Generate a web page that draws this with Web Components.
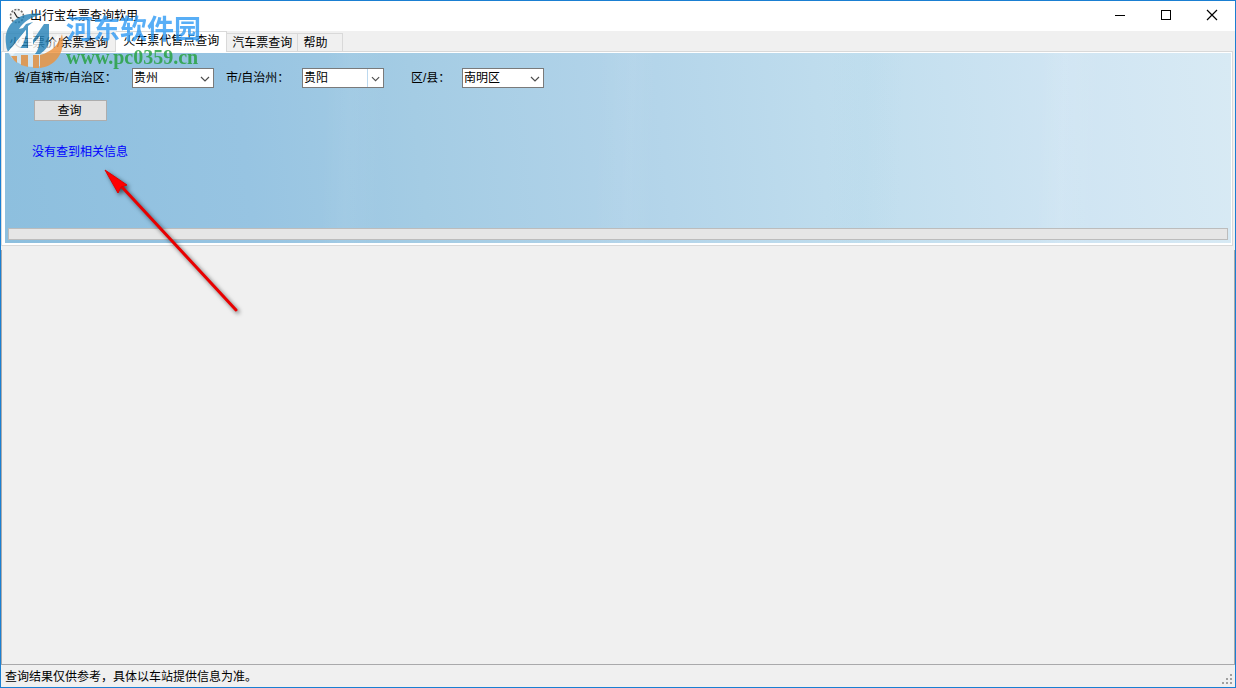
<!DOCTYPE html>
<html lang="zh-CN">
<head>
<meta charset="utf-8">
<title>出行宝车票查询软用</title>
<style>
  html, body { margin: 0; height: 100%; }
  body { font: 12px/16px "Liberation Sans", "Noto Sans CJK SC", sans-serif; color: #000; }
</style>
</head>
<body>
<app-window>
  <title-bar slot="title">出行宝车票查询软用</title-bar>
  <tab-strip slot="tabs">
    <tab-item>火车票价/余票查询</tab-item>
    <tab-item active>火车票代售点查询</tab-item>
    <tab-item>汽车票查询</tab-item>
    <tab-item>帮助</tab-item>
  </tab-strip>
  <query-pane slot="pane">
    <combo-field slot="fields" label="省/直辖市/自治区：" value="贵州" style="--label: 118px"></combo-field>
    <combo-field slot="fields" label="市/自治州：" value="贵阳" split style="--label: 76px"></combo-field>
    <combo-field slot="fields" label="区/县：" value="南明区" style="--label: 51px; margin-left: 15px"></combo-field>
    <push-button slot="action">查询</push-button>
    <span slot="message">没有查到相关信息</span>
  </query-pane>
  <status-bar slot="status">查询结果仅供参考，具体以车站提供信息为准。</status-bar>
  <site-watermark slot="overlay" name="河东软件园" address="www.pc0359.cn"></site-watermark>
  <pointer-arrow slot="overlay"></pointer-arrow>
</app-window>

<script>
class BaseElement extends HTMLElement {
  constructor() {
    super();
    this.attachShadow({ mode: "open" });
  }
  connectedCallback() {
    this.shadowRoot.innerHTML = this.render();
  }
}

customElements.define("app-window", class extends BaseElement {
  render() {
    return `<style>
      :host { position: relative; display: flex; flex-direction: column; box-sizing: border-box;
              min-height: 100vh; border: 1px solid #1a7fd2; background: #f0f0f0; overflow: hidden; }
      main { flex: 1; margin-top: 4px; border: 1px solid #a9a9ab; border-top: 0; }
    </style>
    <slot name="title"></slot>
    <slot name="tabs"></slot>
    <slot name="pane"></slot>
    <main></main>
    <slot name="status"></slot>
    <slot name="overlay"></slot>`;
  }
});

customElements.define("title-bar", class extends BaseElement {
  render() {
    return `<style>
      :host { display: flex; align-items: center; height: 30px; background: #fff; }
      .clock { width: 16px; height: 16px; margin: 0 5px 0 8px; }
      h1 { flex: 1; margin: 0; font: inherit; }
      button { width: 46px; height: 30px; padding: 0 0 2px; border: 0; background: none; display: grid; place-items: center; }
      button svg { width: 12px; height: 12px; fill: none; stroke: #000; }
    </style>
    <svg class="clock" viewBox="0 0 16 16" aria-hidden="true">
      <circle cx="8" cy="8" r="6.5" fill="#f4f4f2" stroke="#6d6d6d" stroke-width="1.6" stroke-dasharray="2 1.4"/>
      <path d="M5 4l3 5 3 1" fill="none" stroke="#222" stroke-width="1.2"/>
    </svg>
    <h1><slot></slot></h1>
    <button aria-label="最小化"><svg viewBox="0 0 12 12" shape-rendering="crispEdges"><path d="M1 6.5h10"/></svg></button>
    <button aria-label="最大化"><svg viewBox="0 0 12 12" shape-rendering="crispEdges"><path d="M1.5 1.5h9v9h-9z"/></svg></button>
    <button aria-label="关闭"><svg viewBox="0 0 12 12"><path d="M1 1l10 10M11 1L1 11" stroke-width="1.2"/></svg></button>`;
  }
});

customElements.define("tab-strip", class extends BaseElement {
  render() {
    return `<style>
      :host { display: flex; align-items: flex-end; height: 20px; padding-left: 2px; }
    </style><slot></slot>`;
  }
});

customElements.define("tab-item", class extends BaseElement {
  render() {
    const on = this.hasAttribute("active");
    return `<style>
      :host { display: block; }
      button { display: block; height: 18px; padding: 1px 5px 0; border: 1px solid #d9d9d9; border-bottom: 0;
               border-left-width: 0; background: #f0f0f0; color: inherit; font: inherit; line-height: 16px; white-space: nowrap; }
      :host(:first-child) button { border-left-width: 1px; padding-right: 7px; }
      :host(:last-child) button { padding-right: 15px; }
      :host([active]) { position: relative; margin-bottom: -1px; }
      :host([active]) button { height: 21px; padding: 0 7px 2px; background: #fff; }
    </style><button role="tab" aria-selected="${on}"><slot></slot></button>`;
  }
});

customElements.define("query-pane", class extends BaseElement {
  render() {
    return `<style>
      :host { display: block; box-sizing: border-box; margin-right: 2px; background: #fff;
              border: 1px solid #d9d9d9; padding: 1px 1px 2px 3px; }
      section { display: flex; flex-direction: column; align-items: flex-start; box-sizing: border-box;
        min-height: 190px; padding: 15px 3px 3px;
        background:
          linear-gradient(92deg, transparent 26%, #ffffff0a 28%, transparent 31%, transparent 48%, #ffffff0a 51%, transparent 53%,
            transparent 67%, #9fd0e614 70%, transparent 73%, transparent 84%, #ffffff10 86%, transparent 89%),
          linear-gradient(84deg, #8dbfde 0%, #97c4e2 20%, #a4cce4 34%, #b1d3e9 50%, #c1deee 70%, #d0e5f3 87%, #d8eaf4 100%); }
      .fields { display: flex; gap: 12px; padding-left: 6px; }
      .action { margin: 12px 0 23px 26px; }
      .message { margin-left: 24px; color: #00f; }
      progress { appearance: none; display: block; box-sizing: border-box; width: 100%; height: 12px;
                 margin-top: auto; border: 1px solid #bcbcbc; background: #e6e6e6; }
      progress::-webkit-progress-bar { background: #e6e6e6; }
      progress::-webkit-progress-value { background: #06b025; }
    </style>
    <section>
      <div class="fields"><slot name="fields"></slot></div>
      <div class="action"><slot name="action"></slot></div>
      <div class="message"><slot name="message"></slot></div>
      <progress value="0" max="100" aria-label="查询进度"></progress>
    </section>`;
  }
});

customElements.define("combo-field", class extends BaseElement {
  render() {
    return `<style>
      :host { display: flex; align-items: center; }
      label { width: var(--label); white-space: nowrap; }
      .box { display: grid; grid-template-columns: 1fr 17px; width: 82px; height: 20px; }
      select { grid-area: 1 / 1 / 2 / 3; appearance: none; box-sizing: border-box; width: 100%; height: 20px; margin: 0;
               padding: 0 17px 0 1px; border: 1px solid #7a7a7a; border-radius: 0; background: #fff; color: #000; font: inherit; }
      svg { grid-area: 1 / 2; width: 17px; height: 20px; pointer-events: none; z-index: 1; box-sizing: border-box; }
      :host([split]) .box svg { margin: 1px 0; height: 18px; border-left: 1px solid #bcd9ef; }
    </style>
    <label for="s">${this.getAttribute("label")}</label>
    <span class="box">
      <select id="s"><option>${this.getAttribute("value")}</option></select>
      <svg viewBox="0 0 17 20" aria-hidden="true"><path d="M4 9l4 4 4-4" fill="none" stroke="#4d4d4d" stroke-width="1.2"/></svg>
    </span>`;
  }
});

customElements.define("push-button", class extends BaseElement {
  render() {
    return `<style>
      :host { display: block; }
      button { display: block; width: 73px; height: 21px; padding: 0 2px 0 0; border: 1px solid #adadad;
               background: #e1e1e1; color: inherit; font: inherit; }
    </style><button type="button"><slot></slot></button>`;
  }
});

customElements.define("status-bar", class extends BaseElement {
  render() {
    return `<style>
      :host { display: flex; align-items: center; justify-content: space-between; height: 22px; padding: 0 2px 0 4px; }
      span { padding-top: 2px; }
      svg { width: 12px; height: 12px; align-self: flex-end; margin-bottom: 2px; fill: #a0a0a0; }
    </style>
    <span><slot></slot></span>
    <svg viewBox="0 0 12 12" shape-rendering="crispEdges" aria-hidden="true">
      <path d="M9 1h2v2h-2zM5 5h2v2h-2zM9 5h2v2h-2zM1 9h2v2h-2zM5 9h2v2h-2zM9 9h2v2h-2z"/>
    </svg>`;
  }
});

customElements.define("site-watermark", class extends BaseElement {
  render() {
    return `<style>
      :host { position: absolute; left: 3px; top: 9px; display: flex; gap: 2px; pointer-events: none; opacity: .8; }
      svg { width: 60px; height: 60px; }
      .words { display: flex; flex-direction: column; white-space: nowrap; }
      .name { font: bold 27px/36px "Noto Sans CJK SC", sans-serif; color: #2f9bf5; }
      .site { font: bold 20px/22px "Liberation Serif", serif; color: #22a03a; }
    </style>
    <svg viewBox="0 0 60 60" aria-hidden="true">
      <path d="M3 40L23 17V33L39 18V36Q47 35 54 24C60 42 46 57 30 57C17 57 7 50 3 40Z" fill="#fff" opacity=".7"/>
      <path d="M2 34C-1 14 16 1 38 4C27 7 19 12 15 19L19 18L22 14L29 12V30L40 14L45 14V30Q45 38 36 44H31Q36 38 36 26L26 38H16Q22 31 22 20L4 42Q2 38 2 34Z" fill="#2482b8"/>
      <path d="M22 20L4 42L8 46L17 37Q22 31 22 20ZM29 12L24 16V40H29ZM36 26L30 33V42Q35 38 36 26Z" fill="#fff"/>
      <path d="M58 24C62 42 52 56 36 58V45C48 42 55 34 58 24Z" fill="#f0923a"/>
      <path d="M7 46H13V53Q9 50 7 46ZM17 45H24V57L17 55ZM29 45H35V58H29Z" fill="#f0923a"/>
    </svg>
    <div class="words">
      <span class="name">${this.getAttribute("name")}</span>
      <span class="site">${this.getAttribute("address")}</span>
    </div>`;
  }
});

customElements.define("pointer-arrow", class extends BaseElement {
  render() {
    return `<style>
      :host { position: absolute; left: 99px; top: 164px; pointer-events: none; }
      svg { display: block; width: 150px; height: 156px; filter: drop-shadow(2px 2px 2px #0009); }
    </style>
    <svg viewBox="0 0 150 156" aria-hidden="true">
      <path d="M22 22L136 145" stroke="#e80000" stroke-width="3" stroke-linecap="round"/>
      <path d="M5 5L27 20L21 22L18 28Z" fill="#f00" stroke="#e00000" stroke-width="1"/>
    </svg>`;
  }
});
</script>
</body>
</html>
